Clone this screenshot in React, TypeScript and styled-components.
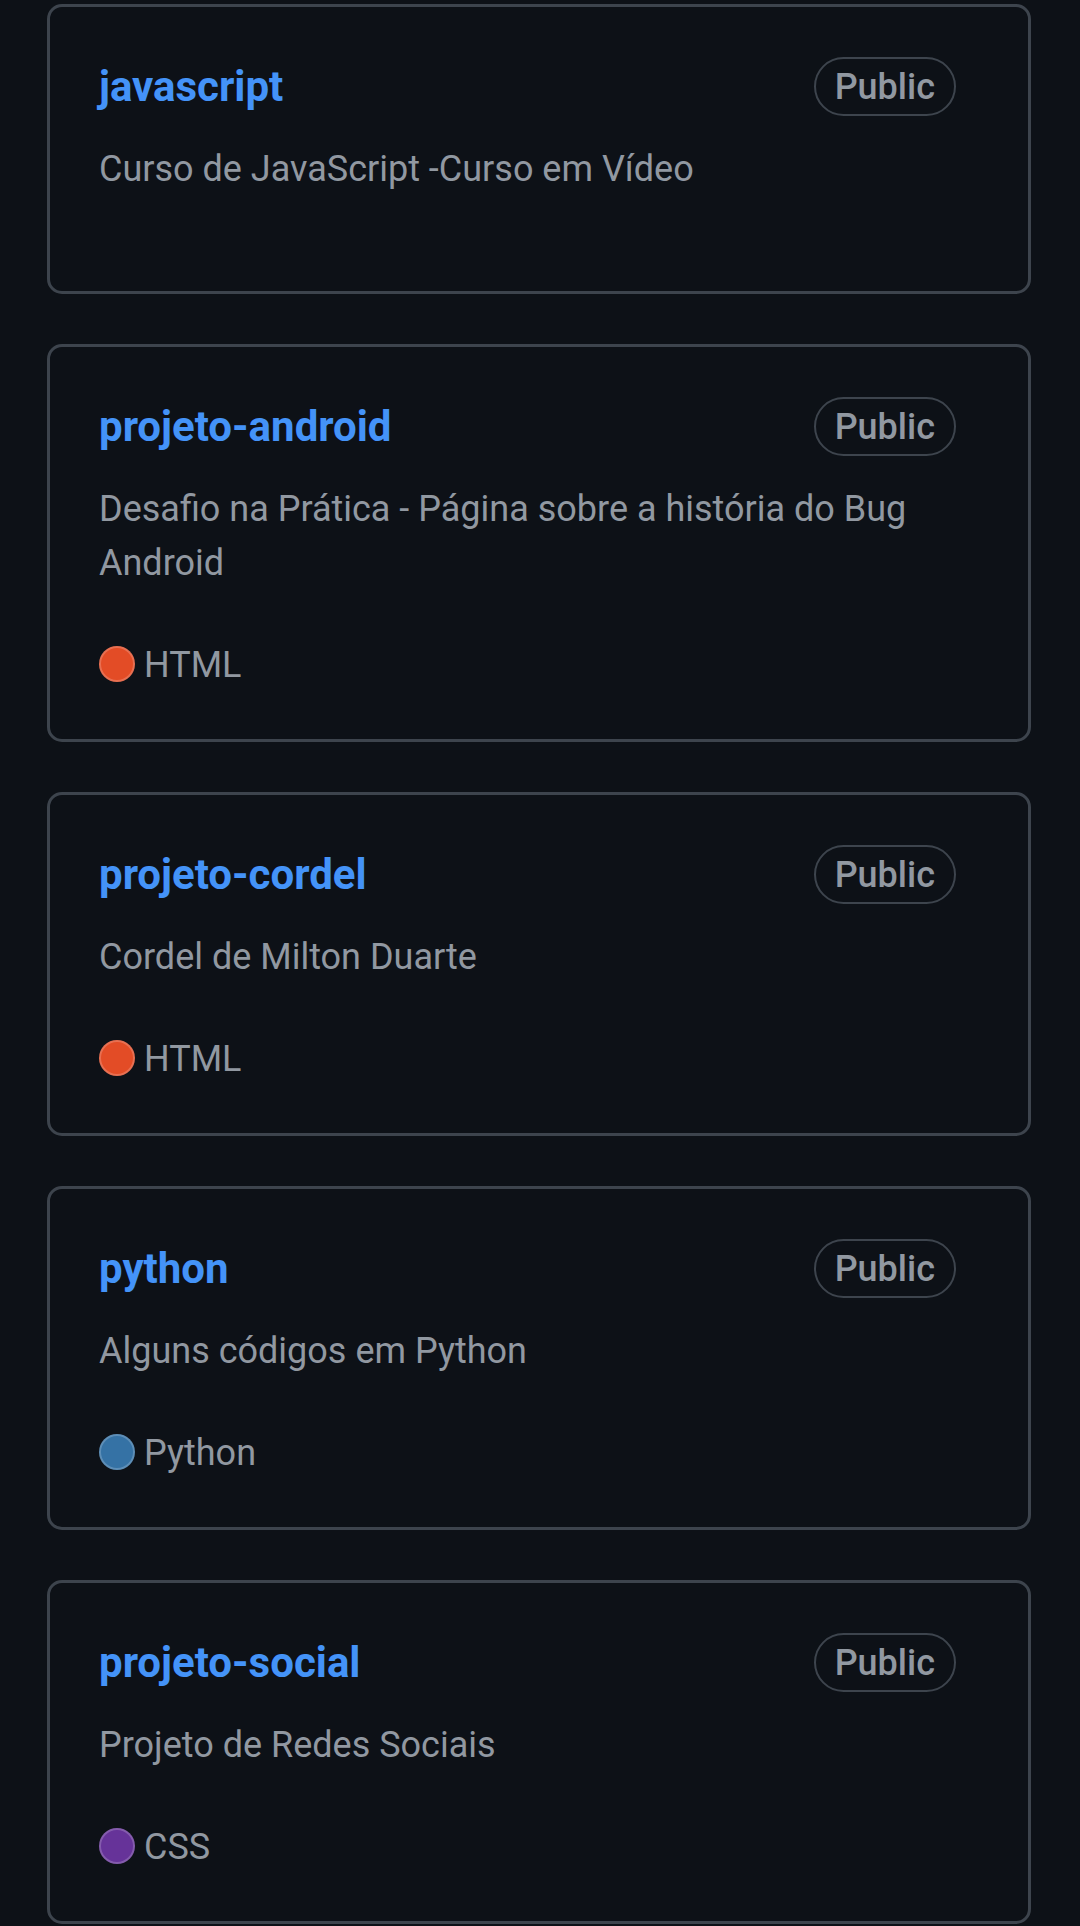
import React from 'react';
import styled, { createGlobalStyle } from 'styled-components';

const GlobalStyle = createGlobalStyle`
  html, body {
    margin: 0;
    padding: 0;
    background: #0d1117;
  }

  body {
    font-family: Roboto, "Liberation Sans", sans-serif;
    -webkit-font-smoothing: antialiased;
  }
`;

const RepoList = styled.main`
  display: flex;
  flex-direction: column;
  gap: 50px;
  padding: 4px 49px 0 47px;
  background: #0d1117;
  min-height: 1926px;
  box-sizing: border-box;
`;

const RepoCard = styled.article`
  display: flex;
  flex-direction: column;
  padding: 50px 72px 47px 49px;
  border: 3px solid #3d444d;
  border-radius: 15px;
`;

const CardHeader = styled.div`
  display: flex;
  align-items: center;
  justify-content: space-between;
  gap: 16px;
`;

const RepoName = styled.a`
  color: #4493f8;
  font-size: 42px;
  font-weight: 700;
  line-height: 50px;
  text-decoration: none;
`;

const VisibilityLabel = styled.span`
  display: inline-flex;
  align-items: center;
  box-sizing: border-box;
  height: 59px;
  padding: 0 19px;
  border: 2px solid #3d444d;
  border-radius: 999px;
  color: #9198a1;
  font-size: 36px;
  font-weight: 500;
  line-height: 1;
`;

const Description = styled.p`
  margin: 26px 0 0;
  color: #9198a1;
  font-size: 36px;
  line-height: 54px;
`;

const CardFooter = styled.div`
  display: flex;
  align-items: center;
  margin-top: 48px;
  color: #9198a1;
  font-size: 36px;
  line-height: 54px;
`;

const LanguageDot = styled.span<{ $color: string }>`
  display: inline-block;
  box-sizing: border-box;
  width: 36px;
  height: 36px;
  margin: -2px 9px 0 0;
  border-radius: 50%;
  border: 2px solid rgba(255, 255, 255, 0.2);
  background-color: ${({ $color }) => $color};
`;

type Repo = {
  name: string,
  description: string,
  language?: string,
  languageColor?: string
};

const repos: Repo[] = [
  {
    name: 'javascript',
    description: 'Curso de JavaScript -Curso em Vídeo',
  },
  {
    name: 'projeto-android',
    description: 'Desafio na Prática - Página sobre a história do Bug Android',
    language: 'HTML',
    languageColor: '#e34c26',
  },
  {
    name: 'projeto-cordel',
    description: 'Cordel de Milton Duarte',
    language: 'HTML',
    languageColor: '#e34c26',
  },
  {
    name: 'python',
    description: 'Alguns códigos em Python',
    language: 'Python',
    languageColor: '#3572a5',
  },
  {
    name: 'projeto-social',
    description: 'Projeto de Redes Sociais',
    language: 'CSS',
    languageColor: '#663399',
  },
];

const App = () => {
  return (
    <>
      <GlobalStyle />
      <RepoList>
        {
          repos.map(({ name, description, language, languageColor }: Repo) =>
            <RepoCard key={name}>
              <CardHeader>
                <RepoName href="#">{name}</RepoName>
                <VisibilityLabel>Public</VisibilityLabel>
              </CardHeader>
              <Description>{description}</Description>
              <CardFooter>
                {language && languageColor && (
                  <>
                    <LanguageDot $color={languageColor} />
                    <span>{language}</span>
                  </>
                )}
              </CardFooter>
            </RepoCard>,
          )
        }
      </RepoList>
    </>
  );
};

export default App;
